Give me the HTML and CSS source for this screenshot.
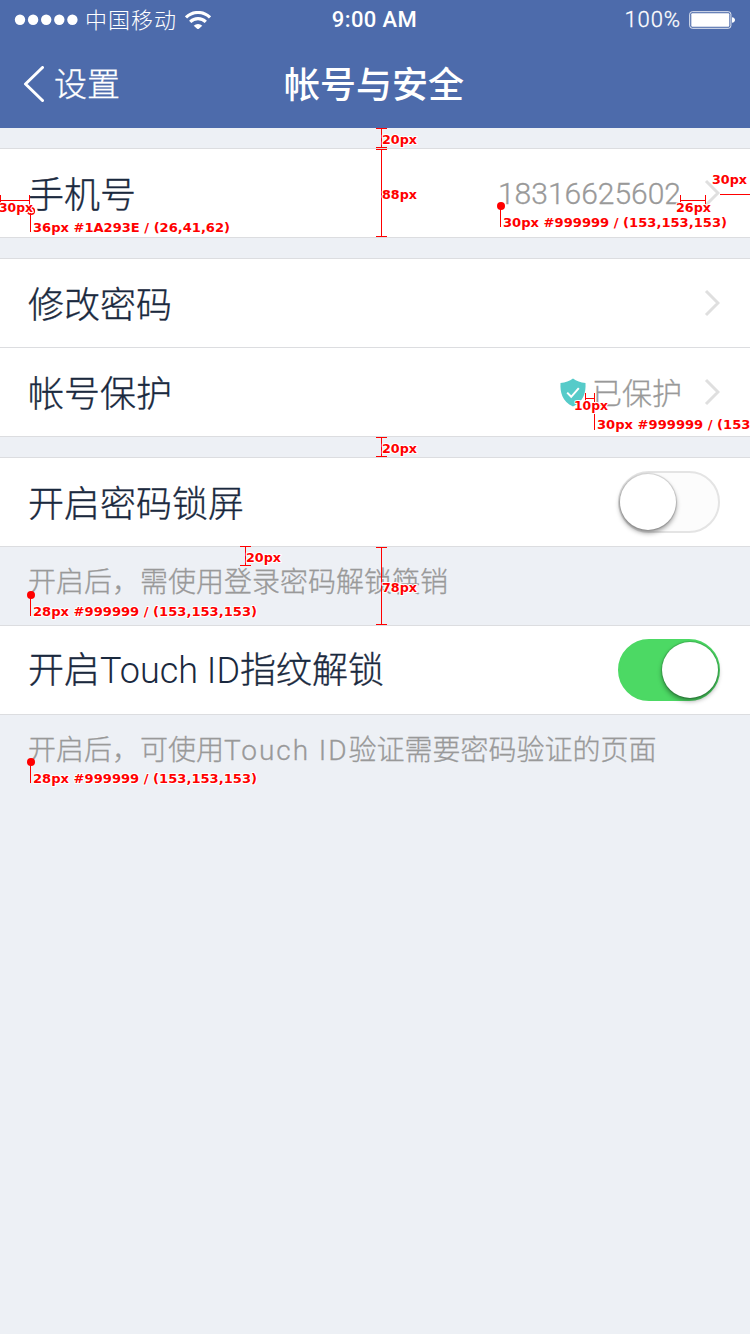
FILE: index.html
```html
<!DOCTYPE html>
<html lang="zh-CN">
<head>
<meta charset="utf-8">
<title>帐号与安全</title>
<link rel="stylesheet" href="styles.css">
</head>
<body>
<div class="screen">
  <header class="header">
    <div class="status">
      <div class="status-left">
        <svg class="signal" width="64" height="12" viewBox="0 0 64 12"><g fill="#fff"><circle cx="6" cy="5.700" r="5.200"/><circle cx="19.100" cy="5.700" r="5.200"/><circle cx="32.200" cy="5.700" r="5.200"/><circle cx="45.300" cy="5.700" r="5.200"/><circle cx="58.400" cy="5.700" r="5.200"/></g></svg>
        <span class="carrier">中国移动</span>
        <svg class="wifi" width="26" height="18" viewBox="0 0 26 18"><g fill="none" stroke="#fff" stroke-width="3.1"><path d="M1 6.4a17 17 0 0 1 24 0"/><path d="M5.2 10.9a11 11 0 0 1 15.6 0"/></g><path d="M8.700 14.800a6.200 6.200 0 0 1 8.600 0L13 18.500z" fill="#fff"/></svg>
      </div>
      <span class="time">9:00 AM</span>
      <div class="status-right">
        <span class="percent">100%</span>
        <svg class="battery" width="46" height="18" viewBox="0 0 46 18"><rect x=".7" y=".7" width="41.2" height="16.6" rx="2.6" fill="none" stroke="#fff" stroke-opacity=".85" stroke-width="1"/><rect x="2.3" y="2.2" width="38" height="13.6" rx="1" fill="#fff"/><path d="M43 6.2q3 .5 3 2.8t-3 2.8z" fill="#fff"/></svg>
      </div>
    </div>
    <nav class="nav">
      <div class="back">
        <svg width="21" height="37" viewBox="0 0 21 37"><path d="M19.500 1.500 2.500 18 19.500 34.500" fill="none" stroke="#fff" stroke-width="3" stroke-linecap="round" stroke-linejoin="round"/></svg>
        <span class="back-text">设置</span>
      </div>
      <h1 class="title">帐号与安全</h1>
    </nav>
  </header>

  <main class="content">
    <section class="group">
      <div class="row">
        <span class="label">手机号</span>
        <div class="value"><span class="phone">18316625602</span><svg class="chevron" width="16" height="28" viewBox="0 0 16 28"><path d="M2 2l12 12L2 26"/></svg></div>
      </div>
    </section>
    <section class="group gap">
      <div class="row">
        <span class="label">修改密码</span>
        <div class="value"><svg class="chevron" width="16" height="28" viewBox="0 0 16 28"><path d="M2 2l12 12L2 26"/></svg></div>
      </div>
      <div class="row">
        <span class="label">帐号保护</span>
        <div class="value">
          <svg class="shield" width="26" height="29" viewBox="0 0 26 29"><path d="M13 .5C9.500 3 5.500 4.600.500 5c-.5 9 1.500 18.500 12.500 23.500C24 23.500 26 14 25.500 5 20.500 4.600 16.500 3 13 .5z" fill="#56cbc9"/><path d="M7.200 14.600l4 4.200 7.600-8.600" fill="none" stroke="#fff" stroke-width="2"/></svg>
          <span class="guarded">已保护</span><svg class="chevron" width="16" height="28" viewBox="0 0 16 28"><path d="M2 2l12 12L2 26"/></svg>
        </div>
      </div>
    </section>
    <section class="group gap">
      <div class="row">
        <span class="label">开启密码锁屏</span>
        <div class="switch"><i class="knob"></i></div>
      </div>
    </section>
    <p class="note">开启后，需使用登录密码解锁筷销</p>
    <section class="group">
      <div class="row">
        <span class="label">开启<span class="latin">Touch ID</span>指纹解锁</span>
        <div class="switch on"><i class="knob"></i></div>
      </div>
    </section>
    <p class="note">开启后，可使用<span class="latin-note">Touch ID</span>验证需要密码验证的页面</p>
  </main>

  <!-- dimension and type annotations over the layout -->
  <svg class="specs" width="750" height="1334" viewBox="0 0 750 1334">
    <g class="lines">
      <path d="M376 128.500h11M381.500 128v20M376 147.500h11"/>
      <path d="M376 149.500h11M381.500 149v88M376 236.500h11"/>
      <path d="M376 437.500h11M381.500 437v20M376 456.500h11"/>
      <path d="M376 547.500h11M381.500 547v78M376 624.500h11"/>
      <path d="M240 546.500h11M245.500 546v20M240 565.500h11"/>
      <path d="M.5 195v11M0 200.500h30M29.500 195v11"/>
      <path d="M680.500 195v11M680 200.500h26M705.500 195v11"/>
      <path d="M720 194.500h30"/>
      <path d="M585.500 393v11M585 398.500h10M594.500 393v11"/>
      <path d="M30.500 211v21M500.500 206v21M594.500 411v19M30.500 595v21M30.500 762v21"/>
    </g>
    <circle cx="31" cy="211" r="3.300" fill="none" stroke="#f00" stroke-width="1.600"/>
    <g fill="#f00"><circle cx="501" cy="206" r="4"/><circle cx="31" cy="595" r="4"/><circle cx="31" cy="762" r="4"/></g>
    <g class="captions">
      <text x="382" y="144" textLength="35" lengthAdjust="spacingAndGlyphs">20px</text>
      <text x="382" y="199" textLength="35" lengthAdjust="spacingAndGlyphs">88px</text>
      <text x="-1" y="212" textLength="34" lengthAdjust="spacingAndGlyphs">30px</text>
      <text x="33" y="232" textLength="197" lengthAdjust="spacingAndGlyphs">36px #1A293E / (26,41,62)</text>
      <text x="712" y="184" textLength="35" lengthAdjust="spacingAndGlyphs">30px</text>
      <text x="676" y="212" textLength="35" lengthAdjust="spacingAndGlyphs">26px</text>
      <text x="503" y="227" textLength="224" lengthAdjust="spacingAndGlyphs">30px #999999 / (153,153,153)</text>
      <text x="574" y="410" textLength="34" lengthAdjust="spacingAndGlyphs">10px</text>
      <text x="597" y="429" textLength="224" lengthAdjust="spacingAndGlyphs">30px #999999 / (153,153,153)</text>
      <text x="382" y="453" textLength="35" lengthAdjust="spacingAndGlyphs">20px</text>
      <text x="246" y="562" textLength="35" lengthAdjust="spacingAndGlyphs">20px</text>
      <text x="382" y="592" textLength="35" lengthAdjust="spacingAndGlyphs">78px</text>
      <text x="33" y="616" textLength="224" lengthAdjust="spacingAndGlyphs">28px #999999 / (153,153,153)</text>
      <text x="33" y="783" textLength="224" lengthAdjust="spacingAndGlyphs">28px #999999 / (153,153,153)</text>
    </g>
  </svg>
</div>
</body>
</html>
```
FILE: styles.css
```css
* { box-sizing: border-box; }
body { margin: 0; }
.screen {
  position: relative;
  width: 750px;
  height: 1334px;
  overflow: hidden;
  background: #edf0f5;
  color: #1a293e;
  font-family: "Noto Sans CJK SC", sans-serif;
  font-weight: 300;
}
svg { display: block; flex: none; }
.header { height: 128px; background: #4d6bab; color: #fff; }
.status {
  display: grid;
  grid-template-columns: 1fr auto 1fr;
  align-items: center;
  height: 40px;
  padding: 0 15px 0 14px;
}
.status-left, .status-right { display: flex; align-items: center; }
.status-right { justify-content: flex-end; gap: 8px; }
.carrier { margin: 0 8px 0 7px; padding-bottom: 4px; font-size: 22px; letter-spacing: 1px; line-height: 36px; }
.time { font: 500 22px/40px "Roboto", sans-serif; letter-spacing: .4px; }
.percent { font: 300 22px/40px "Roboto", sans-serif; letter-spacing: .9px; -webkit-text-stroke: .3px; }
.nav {
  display: grid;
  grid-template-columns: 1fr auto 1fr;
  align-items: center;
  height: 88px;
  padding: 0 23px;
}
.back { display: flex; align-items: center; gap: 10px; font-size: 33px; line-height: 84px; }
.back-text { padding-bottom: 4px; -webkit-text-stroke: .3px; }
.title { margin: 0; padding: 0 2px 4px 0; font-size: 36px; font-weight: 500; line-height: 84px; }
.content { padding-top: 20px; }
.group { background: #fff; border-top: 1px solid #dcdde0; }
.gap { margin-top: 20px; }
.row {
  display: flex;
  align-items: center;
  justify-content: space-between;
  height: 89px;
  padding: 0 30px 0 28px;
  border-bottom: 1px solid #dcdde0;
}
.label { padding-bottom: 2px; font-size: 36px; line-height: 84px; white-space: nowrap; -webkit-text-stroke: .35px; }
.latin { font-family: "Roboto", sans-serif; -webkit-text-stroke: 0; }
.value { display: flex; align-items: center; color: #999; font-size: 30px; line-height: 84px; -webkit-text-stroke: .3px; }
.phone { margin-right: 23px; padding-top: 2px; font-family: "Roboto", sans-serif; }
.shield { margin-right: 6px; }
.guarded { margin-right: 22px; padding-bottom: 2px; }
.chevron { fill: none; stroke: #dfdfdf; stroke-width: 3; }
.switch {
  width: 102px;
  height: 62px;
  padding: 1px 0 0;
  border: 2px solid #e4e4e4;
  border-radius: 31px;
  background: #fcfcfc;
}
.knob {
  display: block;
  width: 56px;
  height: 56px;
  border-radius: 50%;
  background: #fff;
  box-shadow: 0 0 1px 1px rgba(0,0,0,.15), 0 3px 5px rgba(0,0,0,.4);
}
.switch.on { padding-left: 42px; border-color: #4cd964; background: #4cd964; }
.note {
  height: 78px;
  margin: 0;
  padding-left: 28px;
  color: #999;
  font-size: 28px;
  line-height: 66px;
  white-space: nowrap;
  -webkit-text-stroke: .3px;
}
.latin-note { font-family: "Roboto", sans-serif; letter-spacing: 1.95px; }
.specs { position: absolute; top: 0; left: 0; }
.lines { fill: none; stroke: #f00; stroke-width: 1; shape-rendering: crispEdges; }
.captions {
  fill: #f00;
  stroke: #fff;
  stroke-width: 2px;
  stroke-linejoin: round;
  paint-order: stroke;
  font: 700 12px "DejaVu Sans", sans-serif;
}
```
